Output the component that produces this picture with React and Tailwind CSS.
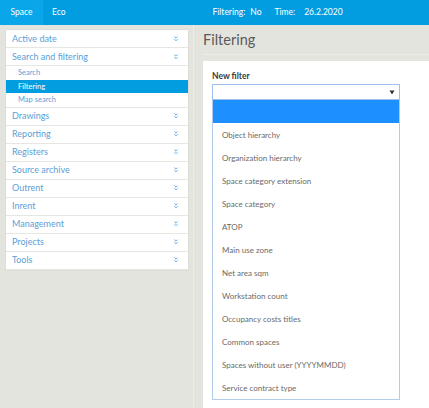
import React from 'react';

const menu = [
  { label: 'Active date' },
  { label: 'Search and filtering', children: ['Search', 'Filtering', 'Map search'] },
  { label: 'Drawings' },
  { label: 'Reporting' },
  { label: 'Registers' },
  { label: 'Source archive' },
  { label: 'Outrent' },
  { label: 'Inrent' },
  { label: 'Management' },
  { label: 'Projects' },
  { label: 'Tools' },
];

const options = [
  'Object hierarchy',
  'Organization hierarchy',
  'Space category extension',
  'Space category',
  'ATOP',
  'Main use zone',
  'Net area sqm',
  'Workstation count',
  'Occupancy costs titles',
  'Common spaces',
  'Spaces without user (YYYYMMDD)',
  'Service contract type',
];

const Chevrons = () => (
  <svg width="4" height="6" viewBox="0 0 4 6" className="shrink-0">
    <path d="M0.4 0.6 L2 2.2 L3.6 0.6" fill="none" stroke="#4a9fdc" strokeWidth="0.9" />
    <path d="M0.4 3.2 L2 4.8 L3.6 3.2" fill="none" stroke="#4a9fdc" strokeWidth="0.9" />
  </svg>
);

const App = () => {
  return (
    <div className="w-[429px] h-[408px] overflow-hidden bg-[#e4e4df] font-['Lato','Noto_Sans',sans-serif] text-[#555]">
      {/* Top bar */}
      <div className="h-[25px] bg-[#019de0] flex items-center text-white text-[8.5px]">
        <div className="h-full w-[43px] bg-[#0aa6ea] flex items-center justify-center">Space</div>
        <div className="ml-[9px]">Eco</div>
        <div className="ml-[147px] flex items-center gap-[5px]">
          <span>Filtering:</span>
          <span className="mr-[8px]">No</span>
          <span>Time:</span>
          <span className="ml-[4px]">26.2.2020</span>
        </div>
      </div>

      <div className="flex h-[383px]">
        {/* Sidebar */}
        <div className="w-[203px] flex">
          <div className="w-[194px] border-r border-[#ececE8] pl-[6px] pt-[5px]">
            <div className="w-[182px] bg-white shadow-[0_0_1px_rgba(0,0,0,0.15)]">
              {menu.map((item) => (
                <div key={item.label} className="border-b border-[#e6e6e3]">
                  <div className="h-[17px] flex items-center justify-between pl-[6px] pr-[10px] text-[9px] text-[#5aa0d8]">
                    <span>{item.label}</span>
                    <Chevrons />
                  </div>
                  {item.children && (
                    <div className="border-t border-[#e6e6e3]">
                      {item.children.map((c) => (
                        <div
                          key={c}
                          className={`h-[13.5px] flex items-center pl-[12px] text-[7.5px] ${
                            c === 'Filtering' ? 'bg-[#019de0] text-white' : 'text-[#5aa0d8]'
                          }`}
                        >
                          {c}
                        </div>
                      ))}
                    </div>
                  )}
                </div>
              ))}
            </div>
          </div>
        </div>

        {/* Main */}
        <div className="flex-1 flex flex-col">
          <div className="h-[30px] flex items-center text-[14.5px] text-[#5a5a5a] border-b border-[#ececE8]">
            Filtering
          </div>
          <div className="mt-[6px] flex-1 bg-white pl-[9px] pt-[10px]">
            <div className="text-[8.5px] font-bold text-[#3a3a3a] h-[11px] leading-[11px]">New filter</div>
            <div className="mt-[2px] w-[188px] h-[16px] border border-[#9ec0ea] flex items-center justify-end pr-[4px]">
              <svg width="6" height="5" viewBox="0 0 6 5">
                <path d="M0.5 0.5 L5.5 0.5 L3 4.5 Z" fill="#333" />
              </svg>
            </div>
            <div className="w-[188px] border-x border-b border-[#b3cbe9]">
              <div className="h-[23px] bg-[#1e8fff]" />
              {options.map((o) => (
                <div key={o} className="h-[23px] flex items-center pl-[9px] text-[8px] text-[#6a6a6a]">
                  {o}
                </div>
              ))}
            </div>
          </div>
        </div>
      </div>
    </div>
  );
};

export default App;
